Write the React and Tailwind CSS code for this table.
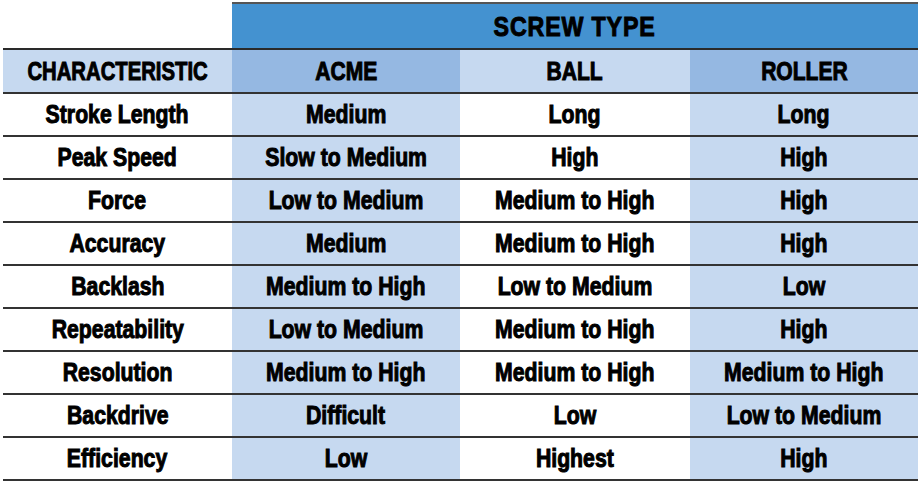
import React from "react";

const rows = [
  ["Stroke Length", "Medium", "Long", "Long"],
  ["Peak Speed", "Slow to Medium", "High", "High"],
  ["Force", "Low to Medium", "Medium to High", "High"],
  ["Accuracy", "Medium", "Medium to High", "High"],
  ["Backlash", "Medium to High", "Low to Medium", "Low"],
  ["Repeatability", "Low to Medium", "Medium to High", "High"],
  ["Resolution", "Medium to High", "Medium to High", "Medium to High"],
  ["Backdrive", "Difficult", "Low", "Low to Medium"],
  ["Efficiency", "Low", "Highest", "High"],
];

const font =
  "font-['Liberation_Sans','Arial',sans-serif] font-bold text-black [-webkit-text-stroke:1px_black]";

function T({ children, s = "scale-x-[0.85]" }) {
  return <span className={`inline-block whitespace-nowrap ${s}`}>{children}</span>;
}

function Cell({ w, bg, children, s }) {
  return (
    <div className={`${w} ${bg} flex items-center justify-center overflow-visible`}>
      <T s={s}>{children}</T>
    </div>
  );
}

export default function App() {
  return (
    <div className={`w-[921px] h-[483px] bg-white pl-[3px] pt-[2px] ${font}`}>
      <div className="flex">
        <div className="w-[229px]" />
        <div className="w-[686px] h-[46px] border-t-2 border-[#555] bg-[#4492d0] flex items-center justify-center text-[28px] leading-none tracking-[1px] pt-[1px]">
          <T s="scale-x-[0.83]">SCREW TYPE</T>
        </div>
      </div>
      <div className="w-[915px] h-[2px] bg-[#2a2a2a]" />
      <div className="flex w-[915px] h-[42px] text-[26px] leading-none">
        <Cell w="w-[229px]" bg="bg-[#c6d9f0]" s="scale-x-[0.78]">CHARACTERISTIC</Cell>
        <Cell w="w-[228px]" bg="bg-[#95b8e2]" s="scale-x-[0.81]">ACME</Cell>
        <Cell w="w-[230px]" bg="bg-[#c6d9f0]" s="scale-x-[0.81]">BALL</Cell>
        <Cell w="w-[228px]" bg="bg-[#95b8e2]" s="scale-x-[0.81]">ROLLER</Cell>
      </div>
      {rows.map((r) => (
        <div key={r[0]} className="w-[915px] border-t-2 border-[#333] flex h-[43px] text-[25px] leading-none">
          <Cell w="w-[229px]" bg="bg-white">{r[0]}</Cell>
          <Cell w="w-[228px]" bg="bg-[#c6d9f0]">{r[1]}</Cell>
          <Cell w="w-[230px]" bg="bg-white">{r[2]}</Cell>
          <Cell w="w-[228px]" bg="bg-[#c6d9f0]">{r[3]}</Cell>
        </div>
      ))}
      <div className="w-[915px] h-[2px] bg-[#333]" />
    </div>
  );
}
